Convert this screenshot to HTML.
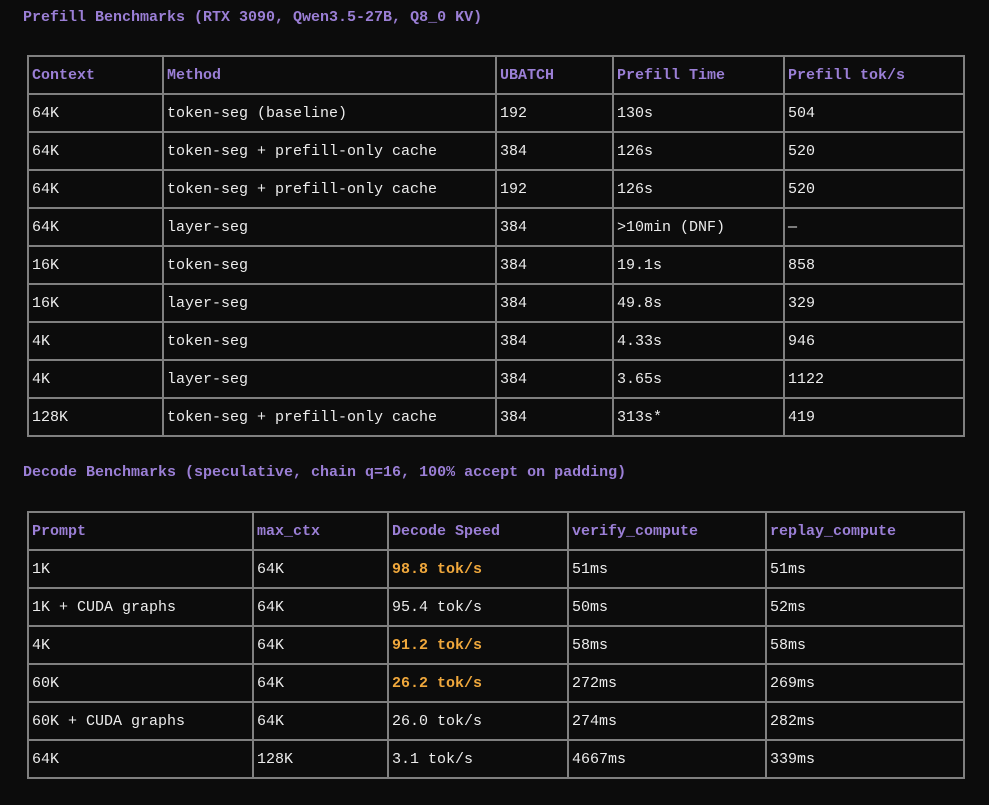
<!DOCTYPE html>
<html><head><meta charset="utf-8"><style>
body{margin:0;background:#0c0c0c;width:989px;height:805px;overflow:hidden;font-family:"Liberation Mono",monospace;font-size:15px;color:#ececec}
.t{position:absolute;left:23px;color:#9b7fd6;font-weight:bold;line-height:18px}
table{position:absolute;left:27px;border-collapse:separate;border-spacing:0;border-left:2px solid #808080;border-top:2px solid #808080;table-layout:fixed}
td,th{box-sizing:border-box;height:38px;border-right:2px solid #808080;border-bottom:2px solid #808080;padding:0 0 0 3px;text-align:left;white-space:nowrap;vertical-align:middle}
th{color:#9b7fd6;font-weight:bold}
.o{color:#f0a83c;font-weight:bold}
</style></head><body>
<div class="t" style="top:9px">Prefill Benchmarks (RTX 3090, Qwen3.5-27B, Q8_0 KV)</div>
<table style="top:55px">
<colgroup><col style="width:135px"><col style="width:333px"><col style="width:117px"><col style="width:171px"><col style="width:180px"></colgroup>
<tr><th>Context</th><th>Method</th><th>UBATCH</th><th>Prefill Time</th><th>Prefill tok/s</th></tr>
<tr><td>64K</td><td>token-seg (baseline)</td><td>192</td><td>130s</td><td>504</td></tr>
<tr><td>64K</td><td>token-seg + prefill-only cache</td><td>384</td><td>126s</td><td>520</td></tr>
<tr><td>64K</td><td>token-seg + prefill-only cache</td><td>192</td><td>126s</td><td>520</td></tr>
<tr><td>64K</td><td>layer-seg</td><td>384</td><td>&gt;10min (DNF)</td><td>—</td></tr>
<tr><td>16K</td><td>token-seg</td><td>384</td><td>19.1s</td><td>858</td></tr>
<tr><td>16K</td><td>layer-seg</td><td>384</td><td>49.8s</td><td>329</td></tr>
<tr><td>4K</td><td>token-seg</td><td>384</td><td>4.33s</td><td>946</td></tr>
<tr><td>4K</td><td>layer-seg</td><td>384</td><td>3.65s</td><td>1122</td></tr>
<tr><td>128K</td><td>token-seg + prefill-only cache</td><td>384</td><td>313s*</td><td>419</td></tr>
</table>
<div class="t" style="top:464px">Decode Benchmarks (speculative, chain q=16, 100% accept on padding)</div>
<table style="top:511px">
<colgroup><col style="width:225px"><col style="width:135px"><col style="width:180px"><col style="width:198px"><col style="width:198px"></colgroup>
<tr><th>Prompt</th><th>max_ctx</th><th>Decode Speed</th><th>verify_compute</th><th>replay_compute</th></tr>
<tr><td>1K</td><td>64K</td><td class="o">98.8 tok/s</td><td>51ms</td><td>51ms</td></tr>
<tr><td>1K + CUDA graphs</td><td>64K</td><td>95.4 tok/s</td><td>50ms</td><td>52ms</td></tr>
<tr><td>4K</td><td>64K</td><td class="o">91.2 tok/s</td><td>58ms</td><td>58ms</td></tr>
<tr><td>60K</td><td>64K</td><td class="o">26.2 tok/s</td><td>272ms</td><td>269ms</td></tr>
<tr><td>60K + CUDA graphs</td><td>64K</td><td>26.0 tok/s</td><td>274ms</td><td>282ms</td></tr>
<tr><td>64K</td><td>128K</td><td>3.1 tok/s</td><td>4667ms</td><td>339ms</td></tr>
</table>
</body></html>
